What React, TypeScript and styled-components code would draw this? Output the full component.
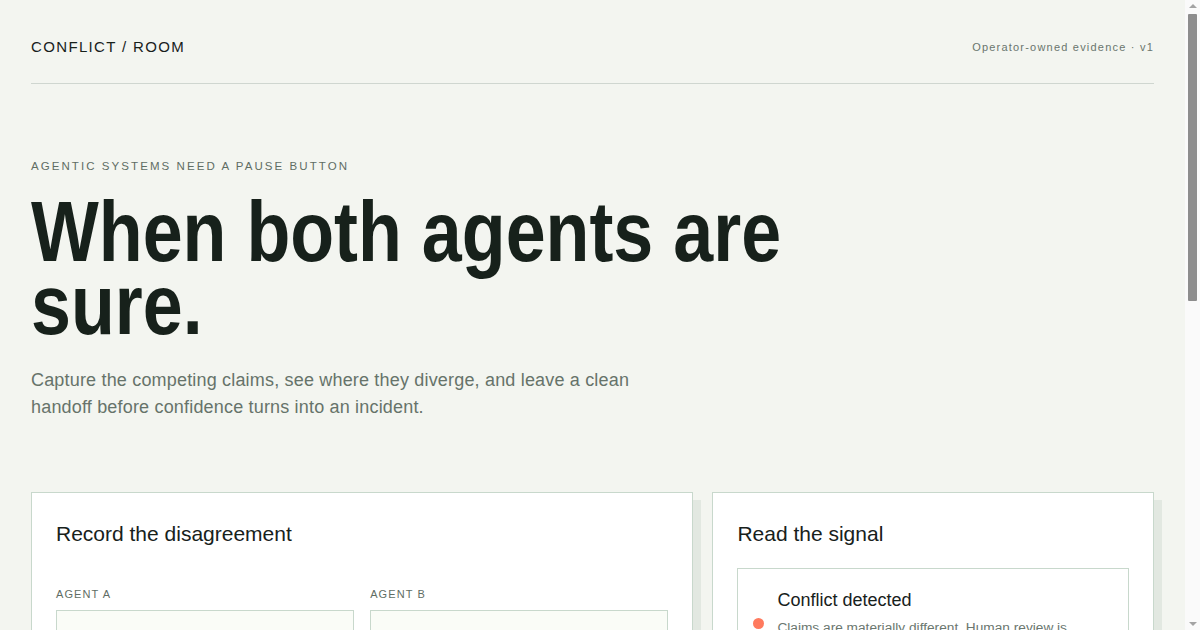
import styled, { createGlobalStyle } from 'styled-components'

const GlobalStyle = createGlobalStyle`
  html, body {
    margin: 0;
    padding: 0;
    background: #f3f5f0;
  }
  body {
    font-family: "Liberation Sans", Arial, sans-serif;
    color: #17211b;
  }
  * {
    box-sizing: border-box;
  }
`

const ScrollTrack = styled.div`
  position: fixed;
  top: 0;
  right: 0;
  bottom: 0;
  width: 15px;
  background: #fafafa;
  display: flex;
  flex-direction: column;
  align-items: center;
  justify-content: space-between;
  padding: 4px 0;
`

const ScrollThumb = styled.div`
  position: absolute;
  top: 14px;
  left: 3px;
  width: 9px;
  height: 287px;
  border-radius: 1px;
  background: #8d8d8d;
`

const Arrow = styled.span<{ $down?: boolean }>`
  width: 0;
  height: 0;
  border-left: 4px solid transparent;
  border-right: 4px solid transparent;
  ${(p) => (p.$down ? 'border-top: 4px solid #a3a3a3;' : 'border-bottom: 4px solid #a3a3a3;')}
`

const Page = styled.div`
  padding: 0 46px 80px 31px;
`

const Header = styled.header`
  display: flex;
  justify-content: space-between;
  align-items: center;
  padding: 38px 0 28px;
  border-bottom: 1px solid #cfd6d0;
`

const Brand = styled.div`
  font-size: 15px;
  line-height: 17px;
  letter-spacing: 0.09em;
  color: #17211b;
`

const Meta = styled.div`
  font-size: 11px;
  letter-spacing: 0.11em;
  color: #6a766e;
`

const Hero = styled.section`
  padding-top: 75px;
`

const Eyebrow = styled.div`
  font-size: 11.5px;
  line-height: 14px;
  letter-spacing: 0.18em;
  text-transform: uppercase;
  color: #5f6d64;
`

const Headline = styled.h1`
  margin: 22px 0 0;
  font-size: 86px;
  line-height: 73px;
  font-weight: 700;
  color: #17211b;
`

// no narrow face installed: squeeze the bold face to the condensed width
const HeadlineText = styled.span`
  display: inline-block;
  width: 960px;
  transform: scaleX(0.835);
  transform-origin: left top;
`

const Lead = styled.p`
  margin: 26px 0 0;
  font-size: 18px;
  line-height: 27px;
  letter-spacing: 0.01em;
  color: #66736a;
  max-width: 620px;
`

const Cards = styled.div`
  display: grid;
  grid-template-columns: 1.5fr 1fr;
  gap: 19px;
  margin-top: 71px;
  align-items: start;
`

const Card = styled.section`
  background: #ffffff;
  border: 1px solid #c8d8cc;
  box-shadow: 8px 8px 0 #e2e8e1;
  padding: 28px 24px 24px;
`

const CardTitle = styled.h2`
  margin: 0;
  font-size: 21px;
  line-height: 26px;
  font-weight: 400;
  color: #17211b;
`

const AgentGrid = styled.div`
  display: grid;
  grid-template-columns: 1fr 1fr;
  gap: 16px;
  margin-top: 40px;
`

const Field = styled.label`
  display: flex;
  flex-direction: column;
  gap: 9px;
`

const FieldLabel = styled.span`
  font-size: 11px;
  line-height: 14px;
  letter-spacing: 0.1em;
  text-transform: uppercase;
  color: #5f6d64;
`

const TextArea = styled.textarea`
  height: 150px;
  resize: none;
  border: 1px solid #c8d8cc;
  background: #fafcf7;
  padding: 12px;
  font-family: "Liberation Sans", Arial, sans-serif;
  font-size: 14px;
  color: #17211b;
  outline: none;
`

const Signal = styled.div`
  display: flex;
  align-items: center;
  gap: 13px;
  margin-top: 21px;
  border: 1px solid #c8d8cc;
  padding: 20px 18px 18px 15px;
`

const Dot = styled.span<{ $tone: string }>`
  flex: none;
  width: 11px;
  height: 11px;
  border-radius: 50%;
  background: ${(p) => p.$tone};
`

const SignalText = styled.div`
  display: flex;
  flex-direction: column;
  gap: 6px;
`

const SignalTitle = styled.div`
  font-size: 18px;
  line-height: 23px;
  color: #17211b;
`

const SignalDesc = styled.div`
  font-size: 13.7px;
  line-height: 20px;
  color: #6b776f;
`

export default function App() {
  return (
    <>
      <GlobalStyle />
      <Page>
        <Header>
          <Brand>CONFLICT / ROOM</Brand>
          <Meta>Operator-owned evidence · v1</Meta>
        </Header>
        <Hero>
          <Eyebrow>Agentic systems need a pause button</Eyebrow>
          <Headline>
            <HeadlineText>When both agents are sure.</HeadlineText>
          </Headline>
          <Lead>
            Capture the competing claims, see where they diverge, and leave a clean handoff before
            confidence turns into an incident.
          </Lead>
        </Hero>
        <Cards>
          <Card>
            <CardTitle>Record the disagreement</CardTitle>
            <AgentGrid>
              <Field>
                <FieldLabel>Agent A</FieldLabel>
                <TextArea />
              </Field>
              <Field>
                <FieldLabel>Agent B</FieldLabel>
                <TextArea />
              </Field>
            </AgentGrid>
          </Card>
          <Card>
            <CardTitle>Read the signal</CardTitle>
            <Signal>
              <Dot $tone="#ff7a5e" />
              <SignalText>
                <SignalTitle>Conflict detected</SignalTitle>
                <SignalDesc>
                  Claims are materially different. Human review is required before either agent
                  acts.
                </SignalDesc>
              </SignalText>
            </Signal>
          </Card>
        </Cards>
      </Page>
      <ScrollTrack aria-hidden>
        <Arrow />
        <ScrollThumb />
        <Arrow $down />
      </ScrollTrack>
    </>
  )
}
